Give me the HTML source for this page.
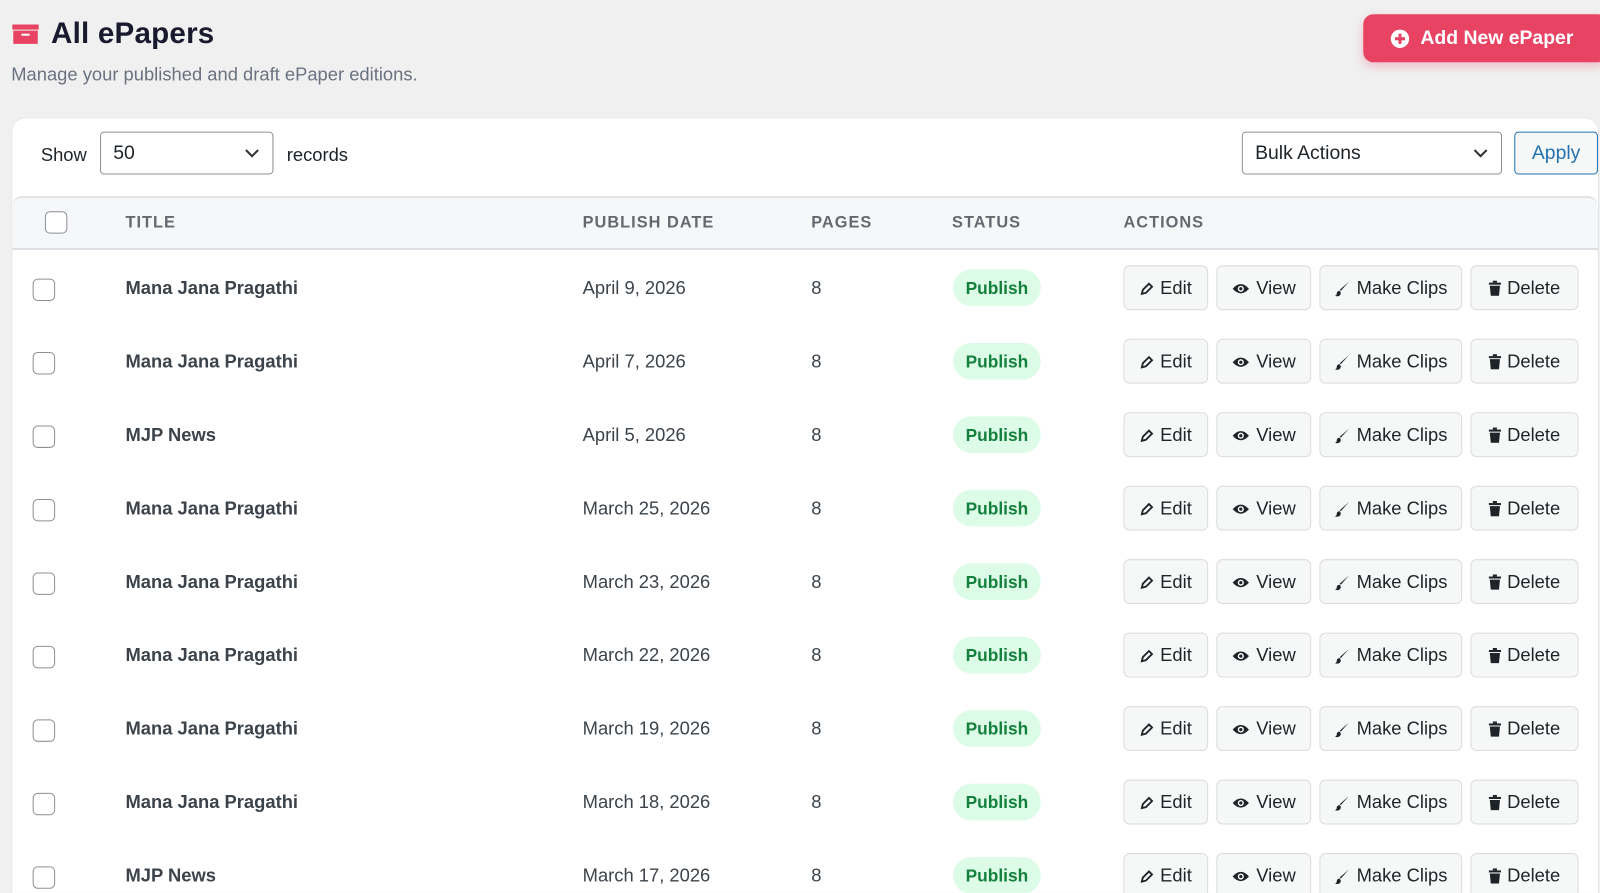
<!DOCTYPE html>
<html><head><meta charset="utf-8"><style>
*{box-sizing:border-box;margin:0;padding:0}
html,body{width:1600px;height:893px;overflow:hidden;background:#f0f0f1}
#w{position:absolute;left:0;top:0;width:1568px;height:875px;overflow:hidden;transform:scale(1.0204);transform-origin:0 0;font-family:"Liberation Sans",sans-serif;color:#1d2327}
.abs{position:absolute}
h1{position:absolute;left:50px;top:17px;font-size:29px;font-weight:900;color:#1a1a2e;letter-spacing:0.2px}
.sub{left:11px;top:63px;font-size:18px;color:#6b7280}
.add{left:1336px;top:14px;width:240px;height:47px;background:#e84363;border-radius:10px;color:#fff;font-weight:bold;font-size:19px;box-shadow:0 4px 10px rgba(232,67,99,.3);display:flex;align-items:center;padding-left:26px;gap:10px}
.card{left:11px;top:115px;width:1556px;height:780px;background:#fff;border-radius:14px;border:1px solid #e5e7eb}
.sel{border:1px solid #8c8f94;border-radius:4px;background:#fff;font-size:19px;display:flex;align-items:center;padding-left:12px;padding-top:2px;color:#1d2327}
.chev{position:absolute;right:12px;top:14px}
.thead{left:12px;top:192px;width:1554px;height:53px;background:#f6f7f8;border-top:2px solid #e1e3e6;border-bottom:2px solid #dcdfe3;border-radius:10px 10px 0 0}
.th{font-size:16px;font-weight:bold;color:#646970;letter-spacing:1px;top:210px}
.cb{width:22px;height:22px;border:1.5px solid #8c8f94;border-radius:5px;background:#fff}
.t{font-size:18px;color:#3c434a}
.pill{width:86px;height:36px;border-radius:18px;background:#dcfce7;color:#15803d;font-weight:bold;font-size:17px;display:flex;align-items:center;justify-content:center;padding-top:2px}
.btn{height:44px;border:1px solid #dcdcde;border-radius:6px;background:#f6f7f7;display:flex;align-items:center;justify-content:center;gap:6px;font-size:18px;color:#1d2327;padding-top:1px}
</style></head><body><div id="w">
<svg class="abs" style="left:12px;top:24px" width="26" height="20" viewBox="0 0 26 20"><rect x="0" y="0" width="26" height="5" fill="#e84363"/><rect x="1" y="6" width="24" height="13" fill="#e84363"/><rect x="9" y="9" width="8" height="2" fill="#fff"/></svg>
<h1>All ePapers</h1>
<div class="abs sub">Manage your published and draft ePaper editions.</div>
<div class="abs add"><svg width="20" height="20" viewBox="0 0 20 20"><circle cx="10" cy="10" r="9" fill="#fff"/><rect x="5" y="8.5" width="10" height="3" fill="#e84363"/><rect x="8.5" y="5" width="3" height="10" fill="#e84363"/></svg>Add New ePaper</div>
<div class="abs card"></div>
<div class="abs" style="left:40px;top:142px;font-size:18px;color:#1d2327">Show</div>
<div class="abs sel" style="left:98px;top:129px;width:170px;height:42px">50<svg class="chev" width="16" height="12" viewBox="0 0 16 12"><path d="M2 3l6 6 6-6" stroke="#333" stroke-width="2" fill="none"/></svg></div>
<div class="abs" style="left:281px;top:142px;font-size:18px">records</div>
<div class="abs sel" style="left:1217px;top:129px;width:255px;height:42px">Bulk Actions<svg class="chev" width="16" height="12" viewBox="0 0 16 12"><path d="M2 3l6 6 6-6" stroke="#333" stroke-width="2" fill="none"/></svg></div>
<div class="abs" style="left:1484px;top:129px;width:82px;height:42px;border:1px solid #2271b1;border-radius:4px;background:#f6f7f7;color:#2271b1;font-size:19px;display:flex;align-items:center;justify-content:center;padding-top:2px">Apply</div>
<div class="abs thead"></div>
<div class="abs cb" style="left:44px;top:207px"></div>
<div class="abs th" style="left:123px">TITLE</div>
<div class="abs th" style="left:571px">PUBLISH DATE</div>
<div class="abs th" style="left:795px">PAGES</div>
<div class="abs th" style="left:933px">STATUS</div>
<div class="abs th" style="left:1101px">ACTIONS</div>
<div id="rows"></div>
</div>
<script>
var d=[["Mana Jana Pragathi","April 9, 2026"],["Mana Jana Pragathi","April 7, 2026"],["MJP News","April 5, 2026"],["Mana Jana Pragathi","March 25, 2026"],["Mana Jana Pragathi","March 23, 2026"],["Mana Jana Pragathi","March 22, 2026"],["Mana Jana Pragathi","March 19, 2026"],["Mana Jana Pragathi","March 18, 2026"],["MJP News","March 17, 2026"]];
var pen='<svg width="14" height="14" viewBox="0 0 14 14"><path d="M2 12l1-4 6-6 3 3-6 6z" fill="none" stroke="#1d2327" stroke-width="1.8"/></svg>';
var eye='<svg width="18" height="12" viewBox="0 0 18 12"><path d="M1 6Q9-3 17 6Q9 15 1 6z" fill="#1d2327"/><circle cx="9" cy="6" r="3" fill="#fff"/><circle cx="9" cy="6" r="1.6" fill="#1d2327"/></svg>';
var brush='<svg width="16" height="16" viewBox="0 0 16 16"><path d="M15 1L7 10l-1-1zM6 10c-2 0-3 1-3 3 0 1-1 2-2 2 3 1 6 0 6-3z" fill="#1d2327"/></svg>';
var trash='<svg width="12" height="15" viewBox="0 0 12 15"><rect x="0" y="2" width="12" height="2" fill="#1d2327"/><rect x="4" y="0" width="4" height="2" fill="#1d2327"/><path d="M1 5h10l-1 10H2z" fill="#1d2327"/></svg>';
var h='';
d.forEach(function(r,i){var c=282+i*72;
h+='<div class="abs cb" style="left:32px;top:'+(c-9)+'px"></div>';
h+='<div class="abs t" style="left:123px;top:'+(c-10)+'px;font-weight:600">'+r[0]+'</div>';
h+='<div class="abs t" style="left:571px;top:'+(c-10)+'px">'+r[1]+'</div>';
h+='<div class="abs t" style="left:795px;top:'+(c-10)+'px">8</div>';
h+='<div class="abs pill" style="left:934px;top:'+(c-18)+'px">Publish</div>';
h+='<div class="abs btn" style="left:1101px;top:'+(c-22)+'px;width:83px">'+pen+'Edit</div>';
h+='<div class="abs btn" style="left:1192px;top:'+(c-22)+'px;width:93px">'+eye+'View</div>';
h+='<div class="abs btn" style="left:1293px;top:'+(c-22)+'px;width:140px">'+brush+'Make Clips</div>';
h+='<div class="abs btn" style="left:1441px;top:'+(c-22)+'px;width:106px">'+trash+'Delete</div>';
});
document.getElementById('rows').innerHTML=h;
</script>
</body></html>
